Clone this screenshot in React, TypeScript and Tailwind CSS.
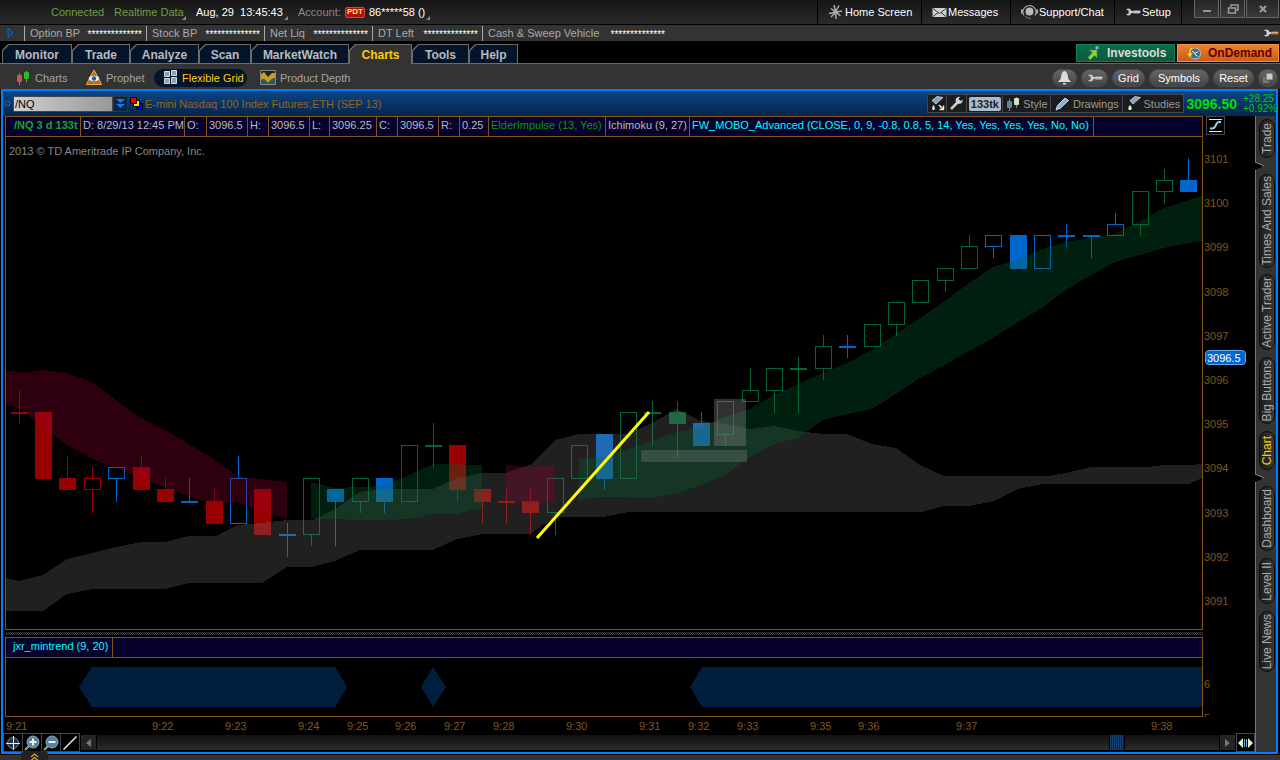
import clsx from "clsx";
import type { ReactNode } from "react";

type Kind = "red" | "blue" | "green";

// x, high, low, body top, body bottom, colour, filled
type Candle = [number, number, number, number, number, Kind, boolean];

const COLORS: Record<Kind, string> = {
  red: "#990000",
  blue: "#0066cc",
  green: "#006633",
};

const candles: Candle[] = [
  [19, 390, 424, 412, 414, "red", true],
  [43, 412, 479, 412, 479, "red", true],
  [67, 456, 490, 478, 490, "red", true],
  [92, 467, 513, 478, 490, "red", false],
  [116, 467, 502, 467, 479, "blue", false],
  [141, 456, 490, 467, 490, "red", true],
  [165, 478, 502, 489, 502, "red", true],
  [189, 478, 503, 501, 503, "blue", true],
  [214, 489, 524, 501, 524, "red", true],
  [238, 456, 524, 478, 524, "blue", false],
  [262, 489, 535, 489, 535, "red", true],
  [287, 523, 557, 534, 536, "blue", true],
  [311, 478, 546, 478, 535, "green", false],
  [335, 489, 546, 489, 502, "blue", true],
  [360, 478, 513, 478, 502, "green", false],
  [384, 478, 513, 478, 502, "blue", true],
  [409, 445, 502, 445, 502, "green", false],
  [433, 423, 468, 445, 447, "green", true],
  [457, 445, 502, 445, 490, "red", true],
  [482, 489, 524, 489, 502, "red", true],
  [506, 489, 524, 501, 503, "red", true],
  [530, 489, 535, 501, 513, "red", true],
  [555, 478, 535, 478, 513, "green", false],
  [579, 445, 479, 445, 479, "green", false],
  [604, 434, 490, 434, 479, "blue", true],
  [628, 412, 479, 412, 479, "green", false],
  [652, 401, 446, 412, 414, "green", true],
  [677, 401, 457, 412, 424, "green", true],
  [701, 412, 446, 423, 446, "blue", true],
  [725, 401, 446, 401, 435, "green", false],
  [750, 368, 402, 390, 402, "green", false],
  [774, 368, 413, 368, 391, "green", false],
  [798, 357, 413, 368, 370, "green", true],
  [823, 335, 380, 346, 369, "green", false],
  [847, 335, 358, 346, 348, "blue", true],
  [872, 324, 347, 324, 347, "green", false],
  [896, 302, 336, 302, 325, "green", false],
  [920, 280, 303, 280, 303, "green", false],
  [945, 268, 292, 268, 281, "green", false],
  [969, 235, 269, 246, 269, "green", false],
  [993, 235, 258, 235, 247, "blue", false],
  [1018, 235, 269, 235, 269, "blue", true],
  [1042, 235, 269, 235, 269, "blue", false],
  [1066, 224, 247, 235, 237, "blue", true],
  [1091, 235, 258, 235, 237, "blue", true],
  [1115, 213, 236, 224, 236, "blue", false],
  [1140, 191, 236, 191, 225, "green", false],
  [1164, 169, 203, 180, 192, "green", false],
  [1188, 158, 192, 180, 192, "blue", true],
];

const grayCloud =
  "6,578 19,581 43,575 67,559 92,553 116,547 141,542 165,542 189,536 216,536 238,525 262,523 287,520 313,520 335,509 360,492 384,489 433,489 457,478 482,473 506,473 530,465 555,440 579,434 628,434 652,423 677,409 701,421 725,424 750,429 774,426 798,431 823,434 847,434 872,444 896,448 920,465 944,476 1048,476 1066,473 1091,467 1148,467 1162,465 1190,465 1202,464 1202,478 1189,484 1042,484 1018,489 994,501 970,506 944,506 922,512 628,512 604,517 555,517 530,534 482,534 457,539 433,550 360,550 335,561 311,567 287,567 262,583 189,583 165,589 92,589 67,594 43,611 6,611";
const greenClouds = [
  "311,482 335,488 384,486 409,475 433,464 482,465 482,507 457,514 433,514 409,519 384,520 311,519",
  "579,459 604,457 628,449 652,441 677,432 701,427 725,417 750,409 774,395 798,384 823,373 847,363 872,350 896,334 920,318 945,301 969,283 993,267 1018,260 1042,249 1066,242 1091,238 1115,234 1140,221 1164,208 1188,200 1202,196 1202,241 1188,243 1164,248 1140,255 1115,262 1091,275 1066,290 1042,308 1018,322 993,338 969,351 945,365 920,378 896,394 872,409 847,414 823,420 798,438 774,444 750,457 725,475 701,485 677,493 652,498 604,497 579,500",
];
const redClouds = [
  "6,371 28,372 43,370 67,373 92,382 116,400 141,418 165,430 189,444 214,459 238,477 262,479 287,482 287,519 262,512 238,502 214,505 189,496 165,488 141,478 116,468 92,459 67,445 43,427 19,408 6,405",
  "506,465 530,467 555,465 555,502 530,503 506,500",
];

const times: [string, number][] = [
  ["9:21", 6],
  ["9:22", 152],
  ["9:23", 225],
  ["9:24", 298],
  ["9:25", 347],
  ["9:26", 395],
  ["9:27", 444],
  ["9:28", 493],
  ["9:30", 566],
  ["9:31", 639],
  ["9:32", 688],
  ["9:33", 737],
  ["9:35", 810],
  ["9:36", 858],
  ["9:37", 956],
  ["9:38", 1151],
];

const prices = [3101, 3100, 3099, 3098, 3097, 3096, 3095, 3094, 3093, 3092, 3091];

const balances = [
  { label: "Option BP", width: "w-[122px]" },
  { label: "Stock BP", width: "w-[118px]" },
  { label: "Net Liq", width: "w-[108px]" },
  { label: "DT Left", width: "w-[110px]" },
  { label: "Cash & Sweep Vehicle", width: "w-[187px]" },
];

const tabs = [
  { name: "Monitor", width: "w-[70px]" },
  { name: "Trade", width: "w-[58px]" },
  { name: "Analyze", width: "w-[69px]" },
  { name: "Scan", width: "w-[52px]" },
  { name: "MarketWatch", width: "w-[98px]" },
  { name: "Charts", width: "w-[63px]", active: true },
  { name: "Tools", width: "w-[57px]" },
  { name: "Help", width: "w-[49px]" },
];

const studyCells = [
  { text: "/NQ 3 d 133t", cls: "w-[75px] pl-2 font-bold text-[#17a32b]" },
  { text: "D: 8/29/13 12:45 PM", cls: "w-[104px] pl-0.5" },
  { text: "O:", cls: "w-[22px] pl-0.5" },
  { text: "3096.5", cls: "w-[41px] pl-0.5" },
  { text: "H:", cls: "w-[21px] pl-0.5" },
  { text: "3096.5", cls: "w-[41px] pl-0.5" },
  { text: "L:", cls: "w-[20px] pl-0.5" },
  { text: "3096.25", cls: "w-[47px] pl-0.5" },
  { text: "C:", cls: "w-[21px] pl-0.5" },
  { text: "3096.5", cls: "w-[41px] pl-0.5" },
  { text: "R:", cls: "w-[21px] pl-0.5" },
  { text: "0.25", cls: "w-[29px] pl-0.5" },
  { text: "ElderImpulse (13, Yes)", cls: "w-[117px] pl-0.5 text-[#0a9a0a]" },
  { text: "Ichimoku (9, 27)", cls: "w-[84px] pl-0.5" },
  {
    text: "FW_MOBO_Advanced (CLOSE, 0, 9, -0.8, 0.8, 5, 14, Yes, Yes, Yes, Yes, No, No)",
    cls: "w-[404px] pl-0.5 text-[#00ffff]",
  },
];

const gadgets = [
  { name: "Trade", size: "h-[39px] mt-[3px]" },
  { name: "Times And Sales", size: "h-[94px]", notch: true },
  { name: "Active Trader", size: "h-[76px] mt-[6px]" },
  { name: "Big Buttons", size: "h-[67px] mt-[7px]" },
  { name: "Chart", size: "h-[39px] mt-[7px]", active: true },
  { name: "Dashboard", size: "h-[65px]", notch: true },
  { name: "Level II", size: "h-[46px] mt-[7px]" },
  { name: "Live News", size: "h-[61px] mt-[7px]" },
];

function Wrench({ handle = "#b8b8b8", head = "#c8c8c8" }: { handle?: string; head?: string }) {
  return (
    <svg width="16" height="10" viewBox="0 0 16 10">
      <path d="M1 2.5C3 .8 6 1.500 6.500 4h3v2h-3C6 8.500 3 9.200 1 7.500l2.600-.9V3.400z" fill={head} />
      <rect x="8" y="3.500" width="7.500" height="3" rx="1" fill={handle} />
      <path d="M9 4.500h6" stroke="#fff" strokeOpacity=".4" />
    </svg>
  );
}

function Corner() {
  return (
    <svg width="4" height="4" viewBox="0 0 4 4" className="mt-3 self-center">
      <path d="M4 0v4H0z" fill="#888" />
    </svg>
  );
}

function TopBar() {
  return (
    <header className="flex h-[25px] items-center border-b border-black bg-linear-to-b from-[#151515] to-[#2b2b2b] whitespace-nowrap">
      <div className="flex items-center pl-[51px] text-[#6f9f3f]">
        <span className="w-[63px]">Connected</span>
        <button className="flex items-center">
          <span className="w-[68px] text-left">Realtime Data</span>
          <Corner />
        </button>
        <button className="ml-2.5 flex items-center text-white">
          <span className="w-[88px] text-left whitespace-pre">Aug, 29  13:45:43</span>
          <Corner />
        </button>
        <span className="ml-2.5 w-[47px] text-[#8a8a8a]">Account:</span>
        <span className="flex h-[11px] w-5 items-center justify-center rounded-xs border border-[#e04040] bg-[#b01010] text-[8px] font-bold text-[#ffee30]">
          PDT
        </span>
        <button className="ml-1 flex items-center text-white">
          <span className="w-[57px] text-left">86*****58 ()</span>
          <Corner />
        </button>
      </div>
      <nav className="ml-auto flex h-full text-white">
        <NavItem width="w-[104px]" label="Home Screen">
          <svg width="16" height="16" viewBox="0 0 16 16" stroke="#aaa" strokeWidth="1.500" fill="none">
            <path d="M7.500 7L6 1M8 7l3-5.500M9 8l5-1M8.500 8.500l4 3.500M7.500 9l.5 6M7 9l-4 4M6.500 8.500L1 9.500M7 7.500L3 4.500" />
            <circle cx="7.500" cy="8" r="1.500" fill="#aaa" />
          </svg>
        </NavItem>
        <NavItem width="w-[89px]" label="Messages">
          <svg width="15" height="11" viewBox="0 0 15 11">
            <rect x=".5" y="1" width="14" height="9" fill="#d0d0d0" />
            <path d="M1 1.500l6.500 5 6.500-5M1 9.500l5-4M14 9.500l-5-4" fill="none" stroke="#333" />
          </svg>
        </NavItem>
        <NavItem width="w-[104px]" label="Support/Chat">
          <svg width="17" height="16" viewBox="0 0 17 16">
            <circle cx="8.500" cy="7.500" r="4" fill="#bbb" />
            <path d="M3 11.500A6.500 6.500 0 1 1 14 11.500" fill="none" stroke="#aaa" strokeWidth="1.200" />
            <path d="M1 5.500v4M16 5.500v4" stroke="#aaa" strokeWidth="2" />
            <path d="M4 12c2 2 4 2.500 6 2.500" fill="none" stroke="#888" />
          </svg>
        </NavItem>
        <NavItem width="w-[67px]" label="Setup">
          <Wrench />
        </NavItem>
        <div className="w-[13px] border-l border-black" />
        <div className="flex gap-px pr-px text-[#999]">
          <WindowButton label="Minimize" width="w-[25px]">
            <path d="M3 9h8" strokeWidth="2" />
          </WindowButton>
          <WindowButton label="Restore" width="w-[25px]">
            <path d="M5 5V3h7v5h-2M2.500 6h7v5h-7z" strokeWidth="1.500" />
          </WindowButton>
          <WindowButton label="Close" width="w-[33px]">
            <path d="M4 4l6 6M10 4l-6 6" strokeWidth="2.200" />
          </WindowButton>
        </div>
      </nav>
    </header>
  );
}

function NavItem({ width, label, children }: { width: string; label: string; children: ReactNode }) {
  return (
    <button className={clsx(width, "flex items-center gap-px border-l border-black pl-2.5")}>
      {children}
      {label}
    </button>
  );
}

function WindowButton({ label, width, children }: { label: string; width: string; children: ReactNode }) {
  return (
    <button
      aria-label={label}
      className={clsx(width, "flex h-[18px] items-center justify-center border border-t-0 border-[#666] bg-linear-to-b from-[#262626] to-[#3a3a3a]")}
    >
      <svg width="14" height="14" viewBox="0 0 14 14" fill="none" stroke="currentColor">
        {children}
      </svg>
    </button>
  );
}

function BalanceBar() {
  return (
    <div className="flex h-4 items-center bg-[#333] text-[#aaa]">
      <svg width="24" height="12" viewBox="0 0 24 12">
        <path d="M8 1l5 5-5 5z" fill="#0c3f86" stroke="#1560b8" />
      </svg>
      {balances.map((b) => (
        <div key={b.label} className={clsx(b.width, "flex h-[15px] items-center justify-between border-l border-[#aaa] pr-1 pl-[5px]")}>
          <span>{b.label}</span>
          <span className="pt-1 text-[10px] text-white">**************</span>
        </div>
      ))}
      <button aria-label="Customize" className="ml-auto pr-px">
        <Wrench handle="#c98028" head="#c8d0e8" />
      </button>
    </div>
  );
}

function TabBar() {
  return (
    <div className="flex h-[23px] items-end border-b border-[#666] bg-black pl-0.5">
      {tabs.map((t) => (
        <button
          key={t.name}
          className={clsx(
            t.width,
            "-mb-px h-5 bg-[#6b6b6b] pt-px pr-px pl-px text-[12px] font-bold [clip-path:polygon(0_6px,6px_0,100%_0,100%_100%,0_100%)]",
            !t.active && "pb-px"
          )}
        >
          <span
            className={clsx(
              "flex h-full items-center justify-center [clip-path:polygon(0_6px,6px_0,100%_0,100%_100%,0_100%)]",
              t.active ? "bg-[#333] pt-px text-[#ffcc00]" : "bg-[#041529] pt-0.5 text-[#bbb]"
            )}
          >
            {t.name}
          </span>
        </button>
      ))}
      <div className="ml-auto flex gap-0.5 self-start pt-[3px] pr-px">
        <button className="flex h-[18px] w-[99px] items-center gap-[7px] border border-[#128058] bg-linear-to-b from-[#0c6b48] to-[#0a5a3c] pl-2.5 text-[12px] font-bold text-[#ddd]">
          <svg width="13" height="14" viewBox="0 0 13 14">
            <path d="M2 4h8v8l-2.500-2.500L3 14l-2-2.500 4.500-5z" fill="#8fd14a" stroke="#4a8a1a" strokeWidth=".6" />
            <circle cx="10" cy="1.800" r="1.700" fill="#7fb4ea" />
          </svg>
          Investools
        </button>
        <button className="flex h-[18px] w-[102px] items-center gap-[7px] border border-[#f09040] bg-linear-to-b from-[#ea8030] to-[#cc5c10] pl-2 text-[12px] font-bold text-[#600000]">
          <svg width="15" height="14" viewBox="0 0 15 14">
            <circle cx="9" cy="7.500" r="5.500" fill="#3d6d90" stroke="#a8c8dc" />
            <path d="M9 7.500L6 5M9 7.500l3-2M9 7.500l2 3" stroke="#fff" />
            <path d="M7 1C4 1 3 3 3 7H.5L4 12l3-5H5c0-3 .5-4 2-4z" fill="#ffd740" stroke="#906010" strokeWidth=".5" />
          </svg>
          OnDemand
        </button>
      </div>
    </div>
  );
}

function CandleIcon({ a, b }: { a: string; b: string }) {
  return (
    <svg width="14" height="14" viewBox="0 0 14 14">
      <path d="M3.500 2v12M10.500 0v11" stroke="#888" />
      <rect x="1" y="4" width="5" height="7" rx="1" fill={a} />
      <rect x="8" y="1" width="5" height="7" rx="1" fill={b} />
    </svg>
  );
}

function SubTabs() {
  return (
    <div className="flex h-[25px] items-center bg-[#333] pt-0.5 text-[#a5a5a5]">
      <button className="flex w-[70px] items-center gap-[5px] pl-4">
        <CandleIcon a="#d05050" b="#22c022" />
        Charts
      </button>
      <button className="flex w-[84px] items-center gap-1 pl-4">
        <svg width="16" height="15" viewBox="0 0 16 15">
          <path d="M8 0l4 7 3.500 7.500H.5L4 7z" fill="#b87020" stroke="#e8a850" />
          <ellipse cx="8" cy="8.500" rx="5" ry="2.800" fill="#eee" />
          <circle cx="8" cy="8.500" r="2.200" fill="#2858a0" />
        </svg>
        Prophet
      </button>
      <button className="flex h-[18px] w-[93px] items-center gap-[5px] rounded-full bg-[#041529] pl-2.5 whitespace-nowrap text-[#ffcc00]">
        <svg width="13" height="15" viewBox="0 0 13 15" fill="#8ba0b8" stroke="#d0dcea">
          <path d="M.5 1.500h5v5h-5zM7.500.5h5v5h-5zM.5 8.500h5v5h-5zM7.500 7.500h5v6h-5z" />
        </svg>
        Flexible Grid
      </button>
      <button className="ml-[13px] flex items-center gap-1">
        <svg width="16" height="15" viewBox="0 0 16 15">
          <path d="M.5.5h15v14H.5z" fill="#222" stroke="#888" />
          <path d="M1 4l3-2 4 5 4-4h3v5l-3 1-4 4-4-4-3 1z" fill="#c8a020" />
          <path d="M1 10l3-1 4 4 4-4 3-1v6H1z" fill="#2a5868" />
        </svg>
        Product Depth
      </button>
      <div className="ml-auto flex gap-1 pr-0.5 text-white">
        <PillButton label="Alerts" width="w-[25px]">
          <svg width="15" height="14" viewBox="0 0 15 14" fill="#ddd">
            <path d="M7.500 0C4 1 4.500 5 3.500 8L1 11h13l-2.500-3c-1-3-.5-7-4-8zM6 12h3v1.500H6z" />
          </svg>
        </PillButton>
        <PillButton label="Settings" width="w-[27px]">
          <Wrench />
        </PillButton>
        <PillButton width="w-[33px]">Grid</PillButton>
        <PillButton width="w-[60px]">Symbols</PillButton>
        <PillButton width="w-[41px]">Reset</PillButton>
        <PillButton label="Detach" width="w-[20px]">
          <svg width="12" height="12" viewBox="0 0 12 12">
            <path d="M1 5h6v6H1z" fill="#777" />
            <path d="M4 1h7v7H4z" fill="#ccc" stroke="#555" />
          </svg>
        </PillButton>
      </div>
    </div>
  );
}

function PillButton({ label, width, children }: { label?: string; width: string; children: ReactNode }) {
  return (
    <button
      aria-label={label}
      className={clsx(width, "flex h-[18px] items-center justify-center rounded-full border border-[#454b55] bg-linear-to-b from-[#666] to-[#444]")}
    >
      {children}
    </button>
  );
}

function ToolButton({ label, width, children }: { label?: string; width: string; children: ReactNode }) {
  return (
    <button
      aria-label={label}
      className={clsx(width, "-ml-px flex h-[19px] items-center justify-center gap-[3px] border border-[#454550] bg-[#1c1c1c] text-[#999]")}
    >
      {children}
    </button>
  );
}

function Flask() {
  return (
    <svg width="14" height="15" viewBox="0 0 14 15">
      <path d="M3 4.500l5-4 5.500 1L6 8z" fill="#8aa4bc" stroke="#c4d4e0" strokeWidth=".8" />
      <path d="M3 9c2.500 3 2 5 0 5s-2.500-2 0-5z" fill="#e8f0d0" />
    </svg>
  );
}

function ChartHeader() {
  return (
    <div className="flex h-[25px] items-center bg-linear-to-b from-[#0c4585] to-[#06254a] pl-px">
      <svg width="7" height="7" viewBox="0 0 7 7" className="mr-0.5">
        <circle cx="3.500" cy="3.500" r="2.500" fill="none" stroke="#1468c8" />
      </svg>
      <input
        aria-label="Symbol"
        defaultValue="/NQ"
        className="h-4 w-[100px] border border-[#444] bg-linear-to-r from-[#d0d0d0] to-[#989898] pl-px text-[11px] text-black outline-none"
      />
      <button aria-label="Symbol list" className="flex h-4 w-[15px] items-center justify-center border border-[#333] bg-[#08264a]">
        <svg width="9" height="10" viewBox="0 0 9 10" fill="#2178d8">
          <path d="M0 0h9L4.500 4zM0 5h9L4.500 9z" />
        </svg>
      </button>
      <svg width="13" height="13" viewBox="0 0 13 13" className="ml-0.5" stroke="#000">
        <path d="M6.500 6.500h6v6h-6z" fill="#0000ee" />
        <path d="M3.500 3.500h6v6h-6z" fill="#ffee00" />
        <path d="M.5.500h6v6h-6z" fill="#ee0000" />
      </svg>
      <h1 className="ml-0.5 text-[#9a6414]">E-mini Nasdaq 100 Index Futures,ETH (SEP 13)</h1>
      <div className="ml-auto flex items-center">
        <ToolButton label="Load study set" width="w-[20px]">
          <svg width="15" height="15" viewBox="0 0 15 15">
            <path d="M2 4.500l5-4 6 1L6 8z" fill="#8aa4bc" stroke="#c4d4e0" strokeWidth=".8" />
            <path d="M3.500 9c2 3 1.500 5 0 5s-2-2 0-5z" fill="#e8f0d0" />
            <path d="M9 9l4 4M13.500 9.500v4h-4" stroke="#e8f0d0" strokeWidth="1.500" fill="none" />
          </svg>
        </ToolButton>
        <ToolButton label="Chart settings" width="w-[21px]">
          <svg width="15" height="15" viewBox="0 0 15 15">
            <path d="M2 13l7-7" stroke="#c8d4b8" strokeWidth="2.500" />
            <path d="M13.500 3.500A3.500 3.500 0 1 1 11 1L9.500 3l2 2z" fill="#c8d4e0" />
          </svg>
        </ToolButton>
        <ToolButton label="133 ticks" width="w-[37px]">
          <span className="rounded-xs bg-[#a9bccb] px-0.5 text-[11px] leading-[14px] font-bold text-[#222]">133tk</span>
        </ToolButton>
        <ToolButton width="w-[49px]">
          <CandleIcon a="#5c84a4" b="#d4e0c0" />
          Style
        </ToolButton>
        <ToolButton width="w-[73px]">
          <svg width="15" height="14" viewBox="0 0 15 14">
            <path d="M1 13l1.500-4.500L10 1l3.500 2.500L5.500 11z" fill="#8cb0d0" stroke="#c8dcea" />
          </svg>
          Drawings
        </ToolButton>
        <ToolButton width="w-[62px]">
          <Flask />
          Studies
        </ToolButton>
        <strong className="ml-0.5 text-[14px] text-[#00dd00]">3096.50</strong>
        <span className="ml-1.5 w-[33px] text-[10px] leading-[10px] whitespace-nowrap text-[#00cc00]">
          +28.25
          <br />
          +0.92%
        </span>
      </div>
    </div>
  );
}

function PriceChart() {
  return (
    <svg viewBox="6 137 1196 492" preserveAspectRatio="none" className="block h-[492px] w-full" shapeRendering="crispEdges">
      {candles.map(([x, high, low, top, bottom, kind, filled]) => (
        <g key={x} fill={COLORS[kind]}>
          <rect x={x} y={high} width="1" height={top - high} />
          <rect x={x} y={bottom} width="1" height={low - bottom} />
          {filled ? (
            <rect x={x - 8} y={top} width="17" height={bottom - top} />
          ) : (
            <rect x={x - 7.5} y={top + 0.5} width="16" height={bottom - top - 1} fill="none" stroke={COLORS[kind]} />
          )}
        </g>
      ))}
      <polygon points={grayCloud} fill="rgb(114 114 114 / 0.28)" />
      {greenClouds.map((p) => (
        <polygon key={p} points={p} fill="rgb(0 102 51 / 0.3)" />
      ))}
      {redClouds.map((p) => (
        <polygon key={p} points={p} fill="rgb(153 0 51 / 0.3)" />
      ))}
      <rect x="714" y="399" width="32" height="47" fill="#8c8c8c" fillOpacity=".35" />
      <rect x="641" y="450" width="106" height="12" fill="#8c8c8c" fillOpacity=".3" />
      <path d="M537 538L649 412" stroke="#ffff00" strokeWidth="3" shapeRendering="auto" />
    </svg>
  );
}

function PriceAxis() {
  return (
    <div className="relative">
      <button aria-label="Scale" className="ml-[3px] flex h-[19px] w-[19px] items-center justify-center border border-[#454555]">
        <svg width="15" height="15" viewBox="0 0 15 15" fill="none">
          <path d="M1 1.500h13M1 13.500h13" stroke="#e8f0d0" />
          <path d="M2 10.500h2c5 0 3-6.500 7-6.500h2" stroke="#9cc8f0" strokeWidth="2" />
        </svg>
      </button>
      <div className="mt-[18px] flex h-[454px] flex-col justify-between pl-px leading-3">
        {prices.map((p) => (
          <span key={p}>{p}</span>
        ))}
      </div>
      <span className="absolute top-[234px] left-0.5 flex h-[15px] w-[41px] items-center rounded-sm border border-[#5fa8f0] bg-[#0066cc] pl-px text-white">
        3096.5
      </span>
    </div>
  );
}

function TrendChart() {
  return (
    <svg viewBox="6 658 1196 58" preserveAspectRatio="none" className="block h-[58px] w-full" fill="#001f3f">
      <path d="M79 687l13-20h243l12 20-12 20H92z" />
      <path d="M421 687l12-20 13 20-13 20z" />
      <path d="M690 687l12-20h500v40H702z" />
    </svg>
  );
}

function Sidebar() {
  return (
    <aside className="flex w-[21px] flex-col items-center border-l border-[#777] bg-[#333] pl-0.5 text-[12px] text-[#aaa]">
      {gadgets.map((g) => (
        <div key={g.name} className="flex w-full flex-col">
          {g.notch && (
            <svg width="10" height="16" viewBox="0 0 10 16" className="-ml-[3px]">
              <path d="M0 4l9 4-9 4z" fill="#000" />
              <path d="M0 4l9 4" stroke="#888" />
            </svg>
          )}
          <button
            className={clsx(
              g.size,
              "mx-px flex items-center justify-center rounded-full border border-[#0c0c0c] bg-linear-to-r from-[#1c1c1c] to-[#383838]",
              g.active && "text-[#ffcc00]"
            )}
          >
            <span className="rotate-180 leading-none whitespace-nowrap [writing-mode:vertical-rl]">{g.name}</span>
          </button>
        </div>
      ))}
    </aside>
  );
}

function BottomTool({ label, children }: { label: string; children: ReactNode }) {
  return (
    <button aria-label={label} className="-mr-px flex h-[19px] w-5 items-center justify-center border border-[#454555] bg-black">
      <svg width="16" height="16" viewBox="0 0 16 16" fill="none">
        {children}
      </svg>
    </button>
  );
}

function BottomBar() {
  return (
    <div className="flex h-[19px] items-center">
      <BottomTool label="Crosshair">
        <circle cx="8" cy="8" r="5.500" fill="#243444" stroke="#6a8098" />
        <path d="M8.500 1v14M1 8.500h14" stroke="#e8f0d0" />
      </BottomTool>
      <BottomTool label="Zoom in">
        <path d="M1 15l4-4" stroke="#8aa" strokeWidth="2" />
        <circle cx="9" cy="7" r="6" fill="#5880a0" stroke="#8aaac4" />
        <path d="M9 3.500v7M5.500 7h7" stroke="#f0f4e0" strokeWidth="2" />
      </BottomTool>
      <BottomTool label="Zoom out">
        <path d="M1 15l4-4" stroke="#8aa" strokeWidth="2" />
        <circle cx="9" cy="7" r="6" fill="#5880a0" stroke="#8aaac4" />
        <path d="M5.500 7h7" stroke="#f0f4e0" strokeWidth="2" />
      </BottomTool>
      <BottomTool label="Draw line">
        <path d="M1.500 14.500l13-13" stroke="#f0f4e0" strokeWidth="1.500" />
      </BottomTool>
      <button aria-label="Scroll left" className="ml-0.5 flex h-[15px] w-[15px] items-center justify-center bg-[#242424]">
        <svg width="5" height="8" viewBox="0 0 5 8">
          <path d="M5 0v8L0 4z" fill="#777" />
        </svg>
      </button>
      <div className="ml-px flex h-[15px] flex-1 justify-end bg-linear-to-b from-[#111] to-[#2b2b2b] pr-[94px]">
        <div className="h-[15px] w-4 border-x border-black bg-[repeating-linear-gradient(90deg,#164274_0_1px,#0a2444_1px_2px)]" />
      </div>
      <button aria-label="Scroll right" className="ml-px flex h-[15px] w-[15px] items-center justify-center bg-[#242424]">
        <svg width="5" height="8" viewBox="0 0 5 8">
          <path d="M0 0v8l5-4z" fill="#777" />
        </svg>
      </button>
      <button aria-label="Fit to width" className="ml-px flex h-[19px] w-[19px] items-center justify-center border border-[#454555] bg-black">
        <svg width="15" height="10" viewBox="0 0 15 10">
          <path d="M5 0v10L0 5zM10 0v10l5-5z" fill="#e8f0d0" />
          <path d="M6.500 1v8M8.500 1v8" stroke="#70a8d8" />
        </svg>
      </button>
    </div>
  );
}

export default function App() {
  return (
    <div className="flex min-h-screen flex-col overflow-hidden bg-black font-['Liberation_Sans',Arial,sans-serif] text-[11px] leading-[14px]">
      <TopBar />
      <BalanceBar />
      <TabBar />
      <SubTabs />
      <main className="mr-0.5 ml-px border-2 border-[#007fff]">
        <ChartHeader />
        <div className="flex">
          <section className="min-w-0 flex-1 pl-0.5 text-[#85551f]">
            <div className="grid grid-cols-[minmax(0,1fr)_52px]">
              <div className="border border-[#85531a]">
                <div className="flex h-5 overflow-hidden border-b border-[#85531a] bg-[#06002c] text-[#bbb]">
                  {studyCells.map((c, i) => (
                    <span key={i} className={clsx(c.cls, "shrink-0 border-r border-[#85531a] pt-px whitespace-nowrap")}>
                      {c.text}
                    </span>
                  ))}
                </div>
                <div className="relative">
                  <PriceChart />
                  <span className="absolute top-[7px] left-[3px] text-[#888]">2013 © TD Ameritrade IP Company, Inc.</span>
                </div>
              </div>
              <PriceAxis />
              <div className="my-0.5 h-[3px] bg-[repeating-conic-gradient(#444_0_25%,#000_0_50%)] bg-[length:2px_2px]" />
              <div />
              <div className="border border-[#85531a]">
                <div className="flex h-5 border-b border-[#85531a] bg-[#06002c] text-[#00ffff]">
                  <span className="w-[107px] border-r border-[#85531a] pt-px pl-[7px]">jxr_mintrend (9, 20)</span>
                </div>
                <TrendChart />
              </div>
              <div className="flex flex-col justify-between overflow-hidden pt-10 pl-px">
                <span>6</span>
                <span className="h-[5px] overflow-hidden leading-[12px]">5</span>
              </div>
              <div className="relative h-4">
                {times.map(([label, x]) => (
                  <span key={label} className="absolute top-0.5" style={{ left: `${((x - 5) / 1198) * 100}%` }}>
                    {label}
                  </span>
                ))}
              </div>
            </div>
            <div className="-ml-0.5">
              <BottomBar />
            </div>
          </section>
          <Sidebar />
        </div>
      </main>
      <footer className="relative flex flex-1 border-t border-black bg-[#333]">
        <button
          aria-label="Expand"
          className="absolute -top-1 left-[21px] flex h-[11px] w-[27px] items-center justify-center rounded-t-sm bg-[#222]"
        >
          <svg width="9" height="8" viewBox="0 0 9 8" fill="none" stroke="#d8a818" strokeWidth="1.200">
            <path d="M1 4l3.500-3L8 4M1 7.500l3.500-3L8 7.500" />
          </svg>
        </button>
      </footer>
    </div>
  );
}
